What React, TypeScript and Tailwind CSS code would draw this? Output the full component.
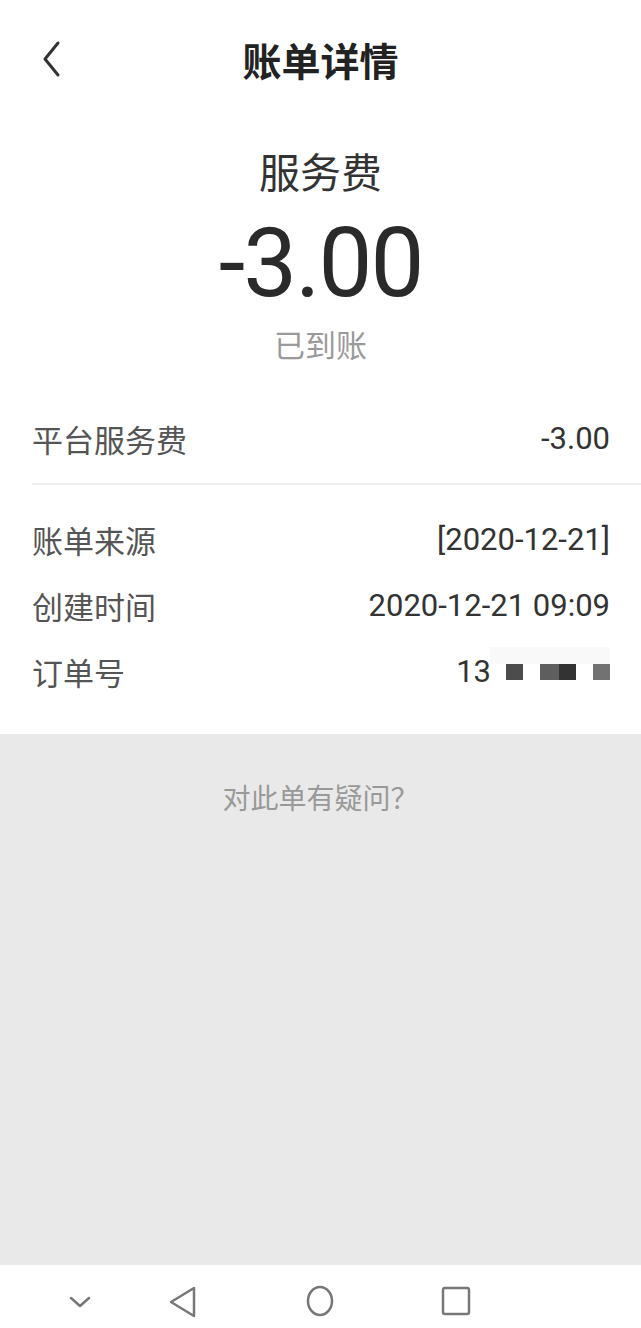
import React from "react";

const cjk = { fontFamily: '"Noto Sans CJK SC", "Noto Sans", sans-serif' };
const num = { fontFamily: 'Roboto, "Noto Sans CJK SC", sans-serif' };

function Row({ label, children }: { label: string; children: React.ReactNode }) {
  return (
    <div className="flex h-[66px] items-center justify-between pl-[32px] pr-[31px]">
      <span className="text-[31px] text-[#555]" style={cjk}>
        {label}
      </span>
      {children}
    </div>
  );
}

export default function App() {
  return (
    <div className="flex h-[1328px] w-[641px] flex-col bg-[#e9e9e9]" style={cjk}>
      {/* white detail card */}
      <div className="bg-white">
        <header className="relative flex h-[118px] items-center justify-center">
          <svg
            className="absolute left-[40px] top-[40px]"
            width="26"
            height="40"
            viewBox="0 0 26 40"
            fill="none"
            stroke="#333"
            strokeWidth="3"
            strokeLinecap="round"
            strokeLinejoin="round"
          >
            <path d="M18 3 L5 19 L18 35" />
          </svg>
          <h1 className="text-[39px] font-bold text-[#222]">账单详情</h1>
        </header>

        <div className="mt-[28px] flex flex-col items-center">
          <div className="text-[41px] leading-[48px] text-[#333]">服务费</div>
          <div
            className="mt-[14px] text-[96px] font-normal leading-[110px] tracking-[-2px] text-[#2a2a2a]"
            style={num}
          >
            -3.00
          </div>
          <div className="mt-[6px] text-[31px] leading-[40px] text-[#9a9a9a]">已到账</div>
        </div>

        <div className="mt-[42px]">
          <Row label="平台服务费">
            <span className="text-[31px] text-[#333]" style={num}>
              -3.00
            </span>
          </Row>
        </div>
        <div className="ml-[32px] mt-[11px] h-[2px] bg-[#efefef]" />

        <div className="pt-[22px] pb-[29px]">
          <Row label="账单来源">
            <span className="text-[31px] text-[#333]" style={num}>
              [2020-12-21]
            </span>
          </Row>
          <Row label="创建时间">
            <span className="text-[31px] text-[#333]" style={num}>
              2020-12-21 09:09
            </span>
          </Row>
          <Row label="订单号">
            <span className="flex items-center text-[31px] text-[#333]" style={num}>
              13
              <span className="relative ml-[15px] flex h-[16px] w-[104px] items-center">
                <span className="absolute -top-[17px] left-[-16px] h-[17px] w-[120px] bg-[#f9f9f9]" />
                <span className="absolute left-0 h-[16px] w-[17px] bg-[#4c4c4c]" />
                <span className="absolute left-[34px] h-[16px] w-[19px] bg-[#5e5e5e]" />
                <span className="absolute left-[53px] h-[16px] w-[17px] bg-[#333]" />
                <span className="absolute left-[87px] h-[16px] w-[17px] bg-[#727272]" />
              </span>
            </span>
          </Row>
        </div>
      </div>

      {/* grey area */}
      <div className="flex flex-1 justify-center pt-[43px]">
        <span className="text-[28px] leading-[40px] text-[#999]">对此单有疑问？</span>
      </div>

      {/* system nav bar */}
      <nav className="relative flex h-[63px] items-center bg-white">
        <svg className="absolute left-[68px] top-[29px]" width="24" height="16" viewBox="0 0 24 16" fill="none" stroke="#777" strokeWidth="2.5" strokeLinecap="round" strokeLinejoin="round">
          <path d="M3 4 L12 12 L21 4" />
        </svg>
        <svg className="absolute left-[167px] top-[20px]" width="32" height="34" viewBox="0 0 32 34" fill="none" stroke="#777" strokeWidth="2.5" strokeLinejoin="round">
          <path d="M27 3 L27 31 L4 17 Z" />
        </svg>
        <svg className="absolute left-[303px] top-[19px]" width="34" height="34" viewBox="0 0 34 34" fill="none" stroke="#777" strokeWidth="2.5">
          <ellipse cx="17" cy="17" rx="12" ry="14" />
        </svg>
        <svg className="absolute left-[440px] top-[20px]" width="32" height="32" viewBox="0 0 32 32" fill="none" stroke="#777" strokeWidth="2.5">
          <rect x="3" y="3" width="26" height="26" rx="2" />
        </svg>
      </nav>
    </div>
  );
}
